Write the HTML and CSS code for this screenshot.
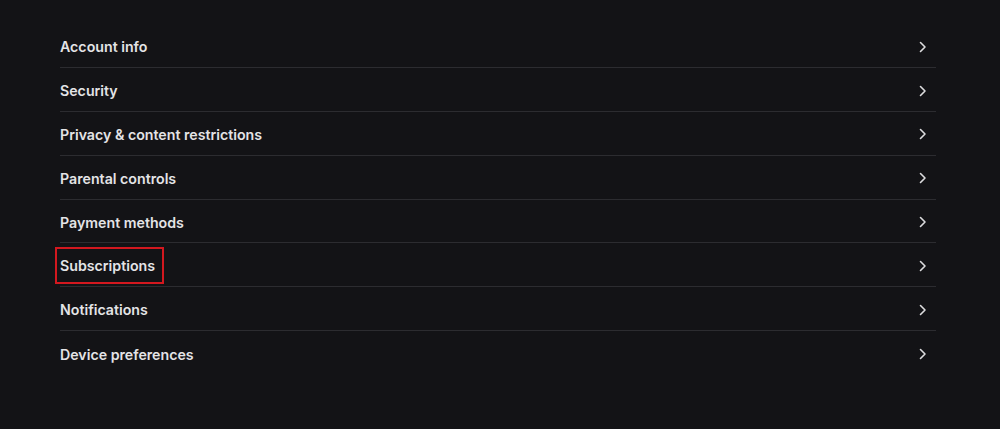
FILE: index.html
```html
<!DOCTYPE html>
<html lang="en">
<head>
  <meta charset="UTF-8">
  <meta name="viewport" content="width=device-width, initial-scale=1.0">
  <title>Settings</title>
  <link rel="stylesheet" href="styles.css">
</head>
<body>
  <div class="container">
    <ul class="menu">
      <li class="item"><span class="label">Account info</span><svg class="chev" viewBox="0 0 8 12"><path d="M1.5 1.5 6 6l-4.5 4.5"/></svg></li>
      <li class="item"><span class="label">Security</span><svg class="chev" viewBox="0 0 8 12"><path d="M1.5 1.5 6 6l-4.5 4.5"/></svg></li>
      <li class="item"><span class="label">Privacy &amp; content restrictions</span><svg class="chev" viewBox="0 0 8 12"><path d="M1.5 1.5 6 6l-4.5 4.5"/></svg></li>
      <li class="item"><span class="label">Parental controls</span><svg class="chev" viewBox="0 0 8 12"><path d="M1.5 1.5 6 6l-4.5 4.5"/></svg></li>
      <li class="item"><span class="label">Payment methods</span><svg class="chev" viewBox="0 0 8 12"><path d="M1.5 1.5 6 6l-4.5 4.5"/></svg></li>
      <li class="item"><span class="label highlight">Subscriptions</span><svg class="chev" viewBox="0 0 8 12"><path d="M1.5 1.5 6 6l-4.5 4.5"/></svg></li>
      <li class="item"><span class="label">Notifications</span><svg class="chev" viewBox="0 0 8 12"><path d="M1.5 1.5 6 6l-4.5 4.5"/></svg></li>
      <li class="item"><span class="label">Device preferences</span><svg class="chev" viewBox="0 0 8 12"><path d="M1.5 1.5 6 6l-4.5 4.5"/></svg></li>
    </ul>
  </div>
</body>
</html>
```

FILE: styles.css
```css
html, body {
  margin: 0;
  padding: 0;
  background-color: #131316;
  height: 100%;
}

body {
  font-family: Inter, "Open Sans", Arial, sans-serif;
  color: #e4e4e6;
}

.container {
  padding: 24.3px 64px 0 60px;
}

.menu {
  list-style: none;
  margin: 0;
  padding: 0;
}

.item {
  display: flex;
  align-items: center;
  justify-content: space-between;
  box-sizing: border-box;
  height: 43.83px;
  padding-top: 2px;
  border-bottom: 1px solid #2c2c30;
  font-size: 14.2px;
  font-weight: 600;
}

.item:last-child {
  border-bottom: none;
}

.label {
  position: relative;
}

.highlight::after {
  content: "";
  position: absolute;
  left: -5px;
  right: -9px;
  top: -10px;
  bottom: -10px;
  border: 2px solid #d3181f;
}

.chev {
  width: 8px;
  height: 12px;
  margin-right: 9px;
  fill: none;
  stroke: #dcdcde;
  stroke-width: 1.6;
  stroke-linecap: round;
  stroke-linejoin: round;
}
```
